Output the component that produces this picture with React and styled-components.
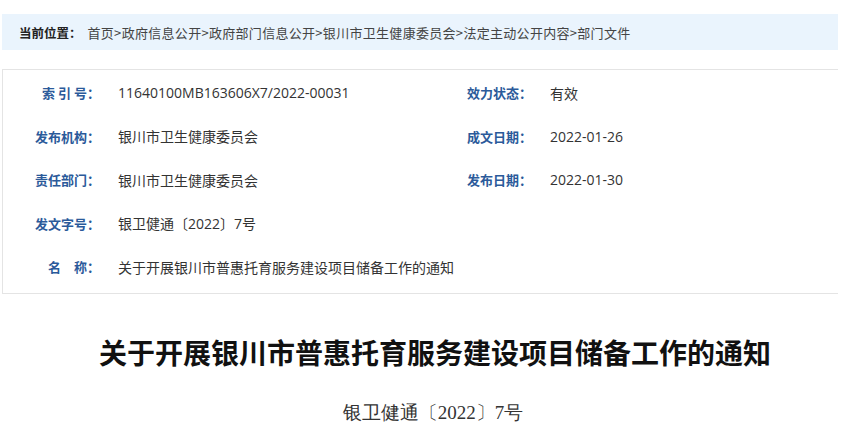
import React from "react";
import styled, { createGlobalStyle } from "styled-components";

const GlobalStyle = createGlobalStyle`
  body {
    margin: 0;
    background: #fff;
    font-family: "Microsoft YaHei", "Noto Sans CJK SC", sans-serif;
  }
`;

const rows = [
  ["索 引 号：", "11640100MB163606X7/2022-00031", "效力状态：", "有效"],
  ["发布机构：", "银川市卫生健康委员会", "成文日期：", "2022-01-26"],
  ["责任部门：", "银川市卫生健康委员会", "发布日期：", "2022-01-30"],
  ["发文字号：", "银卫健通〔2022〕7号"],
  ["名\u3000称：", "关于开展银川市普惠托育服务建设项目储备工作的通知"],
];

function App() {
  return (
    <Page>
      <GlobalStyle />
      <Crumbs>
        <CrumbLabel>当前位置：</CrumbLabel>
        首页&gt;政府信息公开&gt;政府部门信息公开&gt;银川市卫生健康委员会&gt;法定主动公开内容&gt;部门文件
      </Crumbs>

      <InfoBox>
        {rows.map((r, i) => (
          <Row key={i}>
            <Label>{r[0]}</Label>
            <Value wide={!r[2]}>{r[1]}</Value>
            {r[2] && <Label>{r[2]}</Label>}
            {r[3] && <Value>{r[3]}</Value>}
          </Row>
        ))}
      </InfoBox>

      <Title>关于开展银川市普惠托育服务建设项目储备工作的通知</Title>
      <DocNo>银卫健通〔2022〕7号</DocNo>
    </Page>
  );
}

const Page = styled.div`
  width: 836px;
  padding: 14px 2px 0;
`;

const Crumbs = styled.div`
  height: 36px;
  display: flex;
  align-items: center;
  padding-left: 17px;
  background: #eaf4fd;
  font-size: 13px;
  letter-spacing: 0.3px;
  color: #444;
  white-space: nowrap;
`;

const CrumbLabel = styled.b`
  color: #222;
  font-size: 12.5px;
  letter-spacing: 0;
  margin-right: 6px;
`;

const InfoBox = styled.div`
  margin-top: 19px;
  border: 1px solid #e4e4e4;
  border-right: none;
  padding: 1px 0 4px;
`;

const Row = styled.div`
  display: grid;
  grid-template-columns: 97px 350px 82px 1fr;
  height: 43.5px;
  align-items: center;
  font-size: 13px;
`;

const Label = styled.div`
  text-align: right;
  font-weight: bold;
  color: #2b5a9a;
  white-space: pre;
`;

const Value = styled.div`
  padding-left: 18px;
  font-family: "Open Sans", "Noto Sans CJK SC", sans-serif;
  font-size: 14px;
  color: #333;
  white-space: nowrap;
  grid-column: ${(p) => (p.wide ? "span 3" : "auto")};
`;

const Title = styled.h1`
  margin: 40px 0 0;
  padding-left: 30px;
  text-align: center;
  font-size: 28px;
  font-weight: bold;
  color: #111;
  line-height: 36px;
`;

const DocNo = styled.div`
  margin-top: 30px;
  padding-left: 26px;
  text-align: center;
  font-family: "FangSong", "Liberation Serif", serif;
  font-size: 19px;
  color: #333;
`;

export default App;
